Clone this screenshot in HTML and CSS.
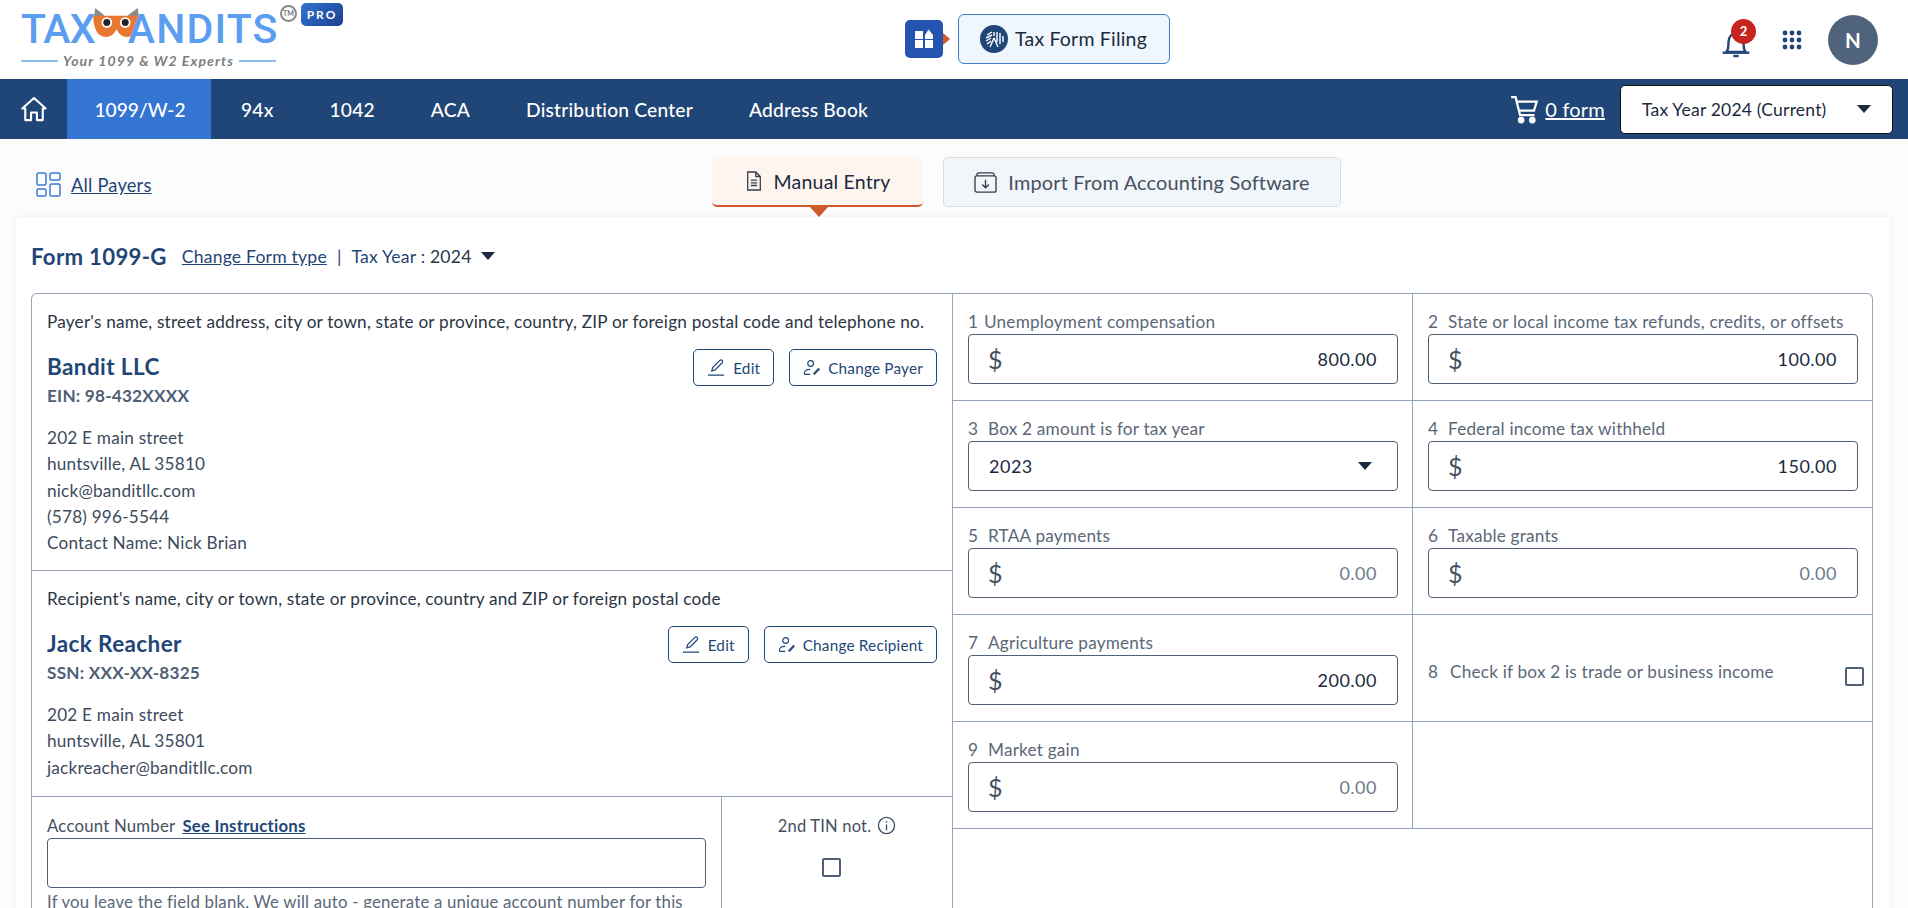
FILE: index.html
```html
<!DOCTYPE html>
<html lang="en">
<head>
    <meta charset="UTF-8">
    <title>Form 1099-G</title>
    <link rel="stylesheet" href="styles.css">
</head>
<body>

    <!-- Top header -->
    <header class="top">
        <div class="logo">
            <div class="logo-word">
                <span>TAX</span>
                <svg class="owl" viewBox="0 0 48 32" width="47" height="31">
                    <path d="M1 9 L2 0 L12 8 Z M35 8 L46 0 L47 9 Z" fill="#8b8b8b"/>
                    <path d="M0 8 H48 C48 20 44 30 35 30 C29 30 26 26 24 22 C22 26 19 30 13 30 C4 30 0 20 0 8 Z" fill="#e8782f"/>
                    <circle cx="14" cy="15" r="5.500" fill="#fff"/>
                    <circle cx="33" cy="15" r="5.500" fill="#fff"/>
                    <circle cx="14" cy="15" r="3.600" fill="#222"/>
                    <circle cx="33" cy="15" r="3.600" fill="#222"/>
                </svg>
                <span class="logo-rest">ANDITS</span>
            </div>
            <div class="logo-tag"><i></i><span>Your 1099 &amp; W2 Experts</span><i></i></div>
            <span class="logo-tm">TM</span>
            <span class="logo-pro">PRO</span>
        </div>

        <div class="switcher">
            <div class="apps-btn">
                <svg viewBox="0 0 20 20" width="20" height="20" fill="#fff">
                    <rect x="1" y="2" width="8" height="8"/>
                    <path d="M14.5 0.5 L19 6 V10 H11 V6 Z"/>
                    <rect x="1" y="11" width="8" height="8"/>
                    <rect x="11" y="11" width="8" height="8"/>
                </svg>
            </div>
            <div class="apps-arrow"></div>
            <a class="filing-btn">
                <svg viewBox="0 0 28 28" width="28" height="28">
                    <circle cx="14" cy="14" r="14" fill="#1f4677"/>
                    <path d="M7 10 L12 7 M6 13 L12 10 M6 16 L11 13 M7 19 L11 16 M14 7 V11 M14 13 L10 22 M14 13 L18 22 M17 7 V17 M20 8 V19 M23 11 V17" stroke="#fff" stroke-width="1.4" fill="none"/>
                </svg>
                <span>Tax Form Filing</span>
            </a>
        </div>

        <div class="top-right">
            <div class="bell">
                <svg viewBox="0 0 24 24" width="32" height="32" fill="none" stroke="#1f4677" stroke-width="1.800">
                    <path d="M5 18 C7 15 6 12 6.500 9.500 C7 6 9.500 4 12 4 C14.500 4 17 6 17.500 9.500 C18 12 17 15 19 18 Z"/>
                    <path d="M2 18.500 H22" />
                    <path d="M10 21 H14" />
                </svg>
                <span class="bell-count">2</span>
            </div>
            <svg class="grid-dots" viewBox="0 0 20 20" width="20" height="20" fill="#1f4677">
                <circle cx="3" cy="3" r="2.400"/><circle cx="10" cy="3" r="2.400"/><circle cx="17" cy="3" r="2.400"/>
                <circle cx="3" cy="10" r="2.400"/><circle cx="10" cy="10" r="2.400"/><circle cx="17" cy="10" r="2.400"/>
                <circle cx="3" cy="17" r="2.400"/><circle cx="10" cy="17" r="2.400"/><circle cx="17" cy="17" r="2.400"/>
            </svg>
            <div class="avatar">N</div>
        </div>
    </header>

    <!-- Main nav -->
    <nav class="nav">
        <a class="nav-home">
            <svg viewBox="0 0 24 24" width="28" height="28" fill="none" stroke="#fff" stroke-width="1.800" stroke-linejoin="round">
                <path d="M2 11.500 L12 2.500 L22 11.500 H19.500 V21.500 H14.500 V15 H9.500 V21.500 H4.500 V11.500 Z"/>
            </svg>
        </a>
        <a class="nav-item active">1099/W-2</a>
        <a class="nav-item">94x</a>
        <a class="nav-item">1042</a>
        <a class="nav-item">ACA</a>
        <a class="nav-item">Distribution Center</a>
        <a class="nav-item">Address Book</a>
        <div class="nav-right">
            <svg viewBox="0 0 26 26" width="29" height="29" fill="none" stroke="#fff" stroke-width="2">
                <path d="M1 2 H5 L9 18 H22"/>
                <path d="M6 6 H24 L21.500 14 H8"/>
                <circle cx="10" cy="22.500" r="2" fill="#fff"/>
                <circle cx="20" cy="22.500" r="2" fill="#fff"/>
            </svg>
            <a class="cart-link">0 form</a>
            <div class="year-select">
                <span>Tax Year 2024 (Current)</span>
                <i class="caret"></i>
            </div>
        </div>
    </nav>

    <!-- Payers link and entry tabs -->
    <div class="subbar">
        <a class="all-payers">
            <svg viewBox="0 0 25 25" width="25" height="25" fill="none" stroke="#3b7bd0" stroke-width="1.500">
                <rect x="1" y="1" width="9" height="12" rx="1.500"/>
                <rect x="14" y="1" width="10" height="7" rx="1.500"/>
                <rect x="1" y="17" width="9" height="7" rx="1.500"/>
                <rect x="14" y="12" width="10" height="12" rx="1.500"/>
            </svg>
            <span>All Payers</span>
        </a>
        <div class="tabs">
            <a class="tab tab-on">
                <svg viewBox="0 0 20 22" width="18" height="20" fill="none" stroke="#333d4b" stroke-width="1.400">
                    <path d="M3 1 H12 L17 6 V21 H3 Z M12 1 V6 H17 M6.500 10 H13.500 M6.500 13 H13.500 M6.500 16 H13.500"/>
                </svg>
                <span>Manual Entry</span>
            </a>
            <a class="tab tab-off">
                <svg viewBox="0 0 24 22" width="23" height="21" fill="none" stroke="#333d4b" stroke-width="1.400">
                    <path d="M3 4 V3 Q3 1 5 1 H19 Q21 1 21 3 V4"/>
                    <rect x="1" y="4" width="22" height="17" rx="2"/>
                    <path d="M12 8 V16 M8.500 13 L12 16.500 L15.500 13"/>
                </svg>
                <span>Import From Accounting Software</span>
            </a>
        </div>
    </div>

    <!-- Form card -->
    <main class="card">
        <div class="card-head">
            <h1>Form 1099-G</h1>
            <a class="link">Change Form type</a>
            <span class="sep">|</span>
            <span class="year-label">Tax Year : <b>2024</b></span>
            <i class="caret"></i>
        </div>

        <div class="form-grid">
            <section class="left-col">
                <div class="party payer">
                    <p class="party-label">Payer's name, street address, city or town, state or province, country, ZIP or foreign postal code and telephone no.</p>
                    <div class="party-top">
                        <div>
                            <h2>Bandit LLC</h2>
                            <div class="tin">EIN: 98-432XXXX</div>
                        </div>
                        <div class="party-btns">
                            <a class="btn">
                                <svg viewBox="0 0 20 20" width="19" height="19" fill="none" stroke="#1f4677" stroke-width="1.300"><path d="M5 13.500 L6 10 L13.500 2.500 Q15 1.500 16 2.500 Q17 3.700 16 5 L8.500 12.500 Z M1 18 H18"/></svg>
                                <span>Edit</span>
                            </a>
                            <a class="btn">
                                <svg viewBox="0 0 20 20" width="18" height="18" fill="none" stroke="#1f4677" stroke-width="1.300"><circle cx="8.500" cy="5" r="3.200"/><path d="M1.500 17 Q1 11.500 8 11.500 M1.500 17 H8"/><path d="M12 17 L18 10.500" stroke-width="2.400"/></svg>
                                <span>Change Payer</span>
                            </a>
                        </div>
                    </div>
                    <div class="address">
                        <div>202 E main street</div>
                        <div>huntsville, AL 35810</div>
                        <div>nick@banditllc.com</div>
                        <div>(578) 996-5544</div>
                        <div>Contact Name: Nick Brian</div>
                    </div>
                </div>

                <div class="party recipient">
                    <p class="party-label">Recipient's name, city or town, state or province, country and ZIP or foreign postal code</p>
                    <div class="party-top">
                        <div>
                            <h2>Jack Reacher</h2>
                            <div class="tin">SSN: XXX-XX-8325</div>
                        </div>
                        <div class="party-btns">
                            <a class="btn">
                                <svg viewBox="0 0 20 20" width="19" height="19" fill="none" stroke="#1f4677" stroke-width="1.300"><path d="M5 13.500 L6 10 L13.500 2.500 Q15 1.500 16 2.500 Q17 3.700 16 5 L8.500 12.500 Z M1 18 H18"/></svg>
                                <span>Edit</span>
                            </a>
                            <a class="btn">
                                <svg viewBox="0 0 20 20" width="18" height="18" fill="none" stroke="#1f4677" stroke-width="1.300"><circle cx="8.500" cy="5" r="3.200"/><path d="M1.500 17 Q1 11.500 8 11.500 M1.500 17 H8"/><path d="M12 17 L18 10.500" stroke-width="2.400"/></svg>
                                <span>Change Recipient</span>
                            </a>
                        </div>
                    </div>
                    <div class="address">
                        <div>202 E main street</div>
                        <div>huntsville, AL 35801</div>
                        <div>jackreacher@banditllc.com</div>
                    </div>
                </div>

                <div class="account-row">
                    <div class="account">
                        <div class="account-label">Account Number <a class="link-bold">See Instructions</a></div>
                        <div class="text-box"></div>
                        <p class="hint">If you leave the field blank, We will auto - generate a unique account number for this form.</p>
                    </div>
                    <div class="tin-not">
                        <div class="tin-label">
                            <span>2nd TIN not.</span>
                            <svg viewBox="0 0 20 20" width="19" height="19" fill="none" stroke="#3f4c5f" stroke-width="1.400">
                                <circle cx="10" cy="10" r="8.500"/>
                                <path d="M10 9 V15 M10 5.500 V7"/>
                            </svg>
                        </div>
                        <i class="check"></i>
                    </div>
                </div>
            </section>

            <section class="right-col">
                <div class="box">
                    <label><span>1</span>Unemployment compensation</label>
                    <div class="amount"><em>$</em><b>800.00</b></div>
                </div>
                <div class="box">
                    <label><span>2</span>State or local income tax refunds, credits, or offsets</label>
                    <div class="amount"><em>$</em><b>100.00</b></div>
                </div>
                <div class="box">
                    <label><span>3</span>Box 2 amount is for tax year</label>
                    <div class="amount select"><b>2023</b><i class="caret"></i></div>
                </div>
                <div class="box">
                    <label><span>4</span>Federal income tax withheld</label>
                    <div class="amount"><em>$</em><b>150.00</b></div>
                </div>
                <div class="box">
                    <label><span>5</span>RTAA payments</label>
                    <div class="amount"><em>$</em><b class="zero">0.00</b></div>
                </div>
                <div class="box">
                    <label><span>6</span>Taxable grants</label>
                    <div class="amount"><em>$</em><b class="zero">0.00</b></div>
                </div>
                <div class="box">
                    <label><span>7</span>Agriculture payments</label>
                    <div class="amount"><em>$</em><b>200.00</b></div>
                </div>
                <div class="box box-check">
                    <label><span>8</span>Check if box 2 is trade or business income</label>
                    <i class="check"></i>
                </div>
                <div class="box">
                    <label><span>9</span>Market gain</label>
                    <div class="amount"><em>$</em><b class="zero">0.00</b></div>
                </div>
                <div class="box"></div>
            </section>
        </div>
    </main>

</body>
</html>
```

FILE: styles.css
```css
/* General */
* {
    box-sizing: border-box;
}

html, body {
    height: 100%;
    overflow: hidden;
}

body {
    margin: 0;
    font-family: 'Lato', sans-serif;
    font-size: 17.200px;
    letter-spacing: 0.2px;
    color: #2b3544;
    background-color: #fcfcfd;
}

p, h1, h2 {
    margin: 0;
}

a {
    cursor: pointer;
}

.caret {
    display: block;
    width: 0;
    height: 0;
    border-left: 7.500px solid transparent;
    border-right: 7.500px solid transparent;
    border-top: 8px solid #1c2a3e;
}

/* Header */
.top {
    height: 79px;
    background-color: #fff;
    display: flex;
    align-items: center;
    padding: 0 30px 0 21px;
}

.logo {
    position: relative;
    width: 322px;
    height: 68px;
    align-self: flex-start;
    margin-top: 5px;
}

.logo-word {
    display: flex;
    height: 46px;
    align-items: flex-end;
    font-family: 'Roboto', sans-serif;
    font-size: 41px;
    font-weight: 500;
    line-height: 44px;
    letter-spacing: -0.8px;
    color: #5b9df0;
}

.logo-rest {
    letter-spacing: 1.200px;
}

.owl {
    margin: 0 -12px 12px -2px;
}

.logo-tag {
    width: 255px;
    display: flex;
    align-items: center;
    gap: 5px;
    margin-top: 1px;
    font-size: 14px;
    font-weight: 700;
    font-style: italic;
    letter-spacing: 1.100px;
    color: #7d7d7d;
    white-space: nowrap;
}

.logo-tag i {
    flex: 1;
    height: 2px;
    background-color: #8fbdf3;
}

.logo-tm {
    position: absolute;
    left: 259px;
    top: 0;
    width: 17px;
    height: 17px;
    border: 2px solid #8a8a8a;
    border-radius: 50%;
    font-size: 7px;
    font-weight: 700;
    line-height: 13px;
    text-align: center;
    letter-spacing: 0;
    color: #777;
}

.logo-pro {
    position: absolute;
    left: 280px;
    top: -2px;
    width: 42px;
    height: 23px;
    border-radius: 5px;
    background: linear-gradient(135deg, #2f74d4, #1f3f8f);
    color: #fff;
    font-size: 12px;
    font-weight: 700;
    line-height: 23px;
    text-align: center;
    letter-spacing: 2px;
}

.switcher {
    display: flex;
    align-items: center;
    margin-left: 562px;
    margin-top: -2px;
}

.apps-btn {
    width: 38px;
    height: 38px;
    border-radius: 5px;
    background-color: #2453b0;
    display: flex;
    align-items: center;
    justify-content: center;
}

.apps-arrow {
    width: 0;
    height: 0;
    margin-right: 8px;
    border-top: 6px solid transparent;
    border-bottom: 6px solid transparent;
    border-left: 7px solid #cf5a2b;
}

.filing-btn {
    width: 212px;
    height: 50px;
    display: flex;
    align-items: center;
    gap: 7px;
    padding-left: 21px;
    border: 1px solid #3f80c9;
    border-radius: 6px;
    background-color: #f0f6fd;
    font-size: 19.500px;
    color: #1c2a3e;
}

.top-right {
    margin-left: auto;
    display: flex;
    align-items: center;
}

.bell {
    position: relative;
    width: 36px;
    height: 34px;
    padding-top: 5px;
}

.bell-count {
    position: absolute;
    left: 11px;
    top: -4px;
    width: 25px;
    height: 25px;
    border-radius: 50%;
    background-color: #c8241f;
    color: #fff;
    font-size: 13px;
    font-weight: 700;
    line-height: 25px;
    text-align: center;
}

.grid-dots {
    margin-left: 26px;
}

.avatar {
    width: 50px;
    height: 50px;
    margin-left: 26px;
    border-radius: 50%;
    background-color: #4f637c;
    color: #fff;
    font-size: 20.500px;
    font-weight: 700;
    line-height: 50px;
    text-align: center;
}

/* Nav */
.nav {
    height: 60px;
    background-color: #1f4677;
    display: flex;
    align-items: center;
    color: #fff;
    padding-right: 15px;
}

.nav-home {
    width: 67px;
    height: 60px;
    display: flex;
    align-items: center;
    justify-content: center;
}

.nav-item {
    height: 60px;
    padding: 0 28px;
    font-size: 19.200px;
    font-weight: 500;
    line-height: 61px;
    white-space: nowrap;
}

.nav-item.active {
    width: 144px;
    margin-right: 2px;
    padding: 0 0 0 2px;
    text-align: center;
    letter-spacing: 0;
    background-color: #3474d3;
}

.nav-right {
    margin-left: auto;
    display: flex;
    align-items: center;
}

.cart-link {
    margin-left: 6px;
    font-size: 20px;
    text-decoration: underline;
}

.year-select {
    width: 273px;
    height: 49px;
    margin-left: 15px;
    padding: 0 21px;
    display: flex;
    align-items: center;
    justify-content: space-between;
    background-color: #fff;
    border-radius: 5px;
    border: 1px solid #111;
    font-size: 17.500px;
    color: #1c2a3e;
}

/* Payers link and tabs */
.subbar {
    height: 78px;
    position: relative;
    display: flex;
    padding-top: 18px;
}

.all-payers {
    position: absolute;
    left: 36px;
    top: 33px;
    display: flex;
    align-items: center;
    gap: 10px;
    font-size: 18.300px;
    color: #1f4677;
    text-decoration: underline;
}

.tabs {
    display: flex;
    gap: 20px;
    margin-left: 712px;
}

.tab {
    position: relative;
    height: 50px;
    display: flex;
    align-items: center;
    justify-content: center;
    gap: 11px;
    font-size: 19.500px;
    border-radius: 5px;
}

.tab-on {
    width: 211px;
    background-color: #fdf5ee;
    border-bottom: 2px solid #cf5a2b;
    color: #1c2a3e;
}

.tab-on::after {
    content: "";
    position: absolute;
    left: 98px;
    top: 50px;
    border-left: 9px solid transparent;
    border-right: 9px solid transparent;
    border-top: 10px solid #cf5a2b;
}

.tab-off {
    width: 398px;
    background-color: #f1f6fa;
    border: 1px solid #d7dde3;
    font-size: 19.900px;
    color: #46505f;
}

/* Card */
.card {
    margin: 0 18px 0 16px;
    padding: 0 17px 0 15px;
    background-color: #fff;
    box-shadow: 0 0 6px rgba(40, 60, 90, 0.06);
    height: 700px;
}

.card-head {
    height: 76px;
    padding-top: 2px;
    display: flex;
    align-items: center;
    font-size: 17.600px;
    color: #1f4677;
}

.card-head h1 {
    font-size: 22.200px;
    font-weight: 700;
    letter-spacing: 0.3px;
}

.card-head .link {
    margin-left: 15px;
    text-decoration: underline;
}

.sep {
    margin: 0 10px;
}

.year-label b {
    font-weight: 400;
    color: #2b3544;
}

.card-head .caret {
    margin-left: 9px;
}

.form-grid {
    display: grid;
    grid-template-columns: 921px 921px;
    border: 1px solid #94a5b8;
    border-bottom: none;
    border-radius: 6px 6px 0 0;
    height: 640px;
}

/* Left column */
.left-col {
    border-right: 1px solid #94a5b8;
}

.party {
    padding: 0 15px 0 15px;
}

.party-label {
    color: #2b3544;
    line-height: 22px;
}

.party h2 {
    font-size: 22.500px;
    font-weight: 700;
    letter-spacing: 0.4px;
    line-height: 30px;
    color: #1f4677;
}

.tin {
    margin-top: 2px;
    font-weight: 700;
    line-height: 24px;
    color: #4f5f75;
}

.party-top {
    display: flex;
    justify-content: space-between;
    align-items: flex-start;
}

.party-btns {
    display: flex;
    gap: 15px;
    margin-top: -3px;
}

.btn {
    height: 37px;
    padding: 0 13px;
    display: flex;
    align-items: center;
    gap: 7px;
    border: 1px solid #1f4677;
    border-radius: 5px;
    font-size: 15.300px;
    color: #1f4677;
}

.address {
    margin-top: 17px;
    line-height: 26.300px;
    color: #3d4a5c;
}

.payer {
    height: 277px;
    padding-top: 17px;
    border-bottom: 1px solid #94a5b8;
}

.payer .party-top {
    margin-top: 19px;
}

.recipient {
    height: 226px;
    padding-top: 17px;
    border-bottom: 1px solid #94a5b8;
}

.recipient .party-top {
    margin-top: 19px;
}

.account-row {
    display: flex;
    height: 136px;
}

.account {
    width: 690px;
    padding: 16px 15px 0;
    border-right: 1px solid #94a5b8;
    font-size: 16.800px;
}

.account-label {
    line-height: 25px;
    color: #46505f;
}

.link-bold {
    margin-left: 3px;
    font-weight: 700;
    color: #1f4677;
    text-decoration: underline;
}

.text-box {
    height: 50px;
    margin-top: 0;
    border: 1px solid #4f5f75;
    border-radius: 4px;
}

.hint {
    margin-top: 3px;
    color: #5b6778;
    line-height: 22px;
}

.tin-not {
    flex: 1;
    display: flex;
    flex-direction: column;
    align-items: center;
    padding-top: 16px;
    font-size: 16.500px;
}

.tin-label {
    display: flex;
    align-items: center;
    gap: 6px;
    height: 25px;
    color: #46505f;
}

.check {
    display: block;
    width: 19px;
    height: 19px;
    border: 2px solid #4f5f75;
    border-radius: 2px;
}

.tin-not .check {
    margin: 20px 12px 0 0;
}

/* Right column boxes */
.right-col {
    display: grid;
    grid-template-columns: 460px 459px;
    grid-auto-rows: 107px;
}

.box {
    padding: 15px 14px 0 15px;
    border-bottom: 1px solid #94a5b8;
}

.box:nth-child(odd) {
    border-right: 1px solid #94a5b8;
}

.box label {
    display: flex;
    height: 24px;
    align-items: center;
    color: #5b6778;
    white-space: nowrap;
}

.box label span {
    width: 20px;
}

.box:first-child label span {
    width: 16px;
}

.amount {
    height: 50px;
    margin-top: 1px;
    padding: 0 20px 0 19px;
    display: flex;
    align-items: center;
    justify-content: space-between;
    border: 1px solid #4f5f75;
    border-radius: 4px;
}

.amount.select {
    padding: 0 25px 0 20px;
}

.amount em {
    font-style: normal;
    font-size: 25px;
    font-weight: 400;
    color: #46505f;
}

.amount b {
    font-size: 18px;
    letter-spacing: 0.5px;
    font-weight: 400;
    color: #1c2a3e;
}

.amount b.zero {
    color: #6e7989;
}

.box-check {
    display: flex;
    align-items: center;
    justify-content: space-between;
    padding: 0 8px 0 15px;
}

.box-check label {
    margin-top: 7px;
}

.box-check label span {
    width: 22px;
}

.box-check .check {
    margin-top: 16px;
}
```
